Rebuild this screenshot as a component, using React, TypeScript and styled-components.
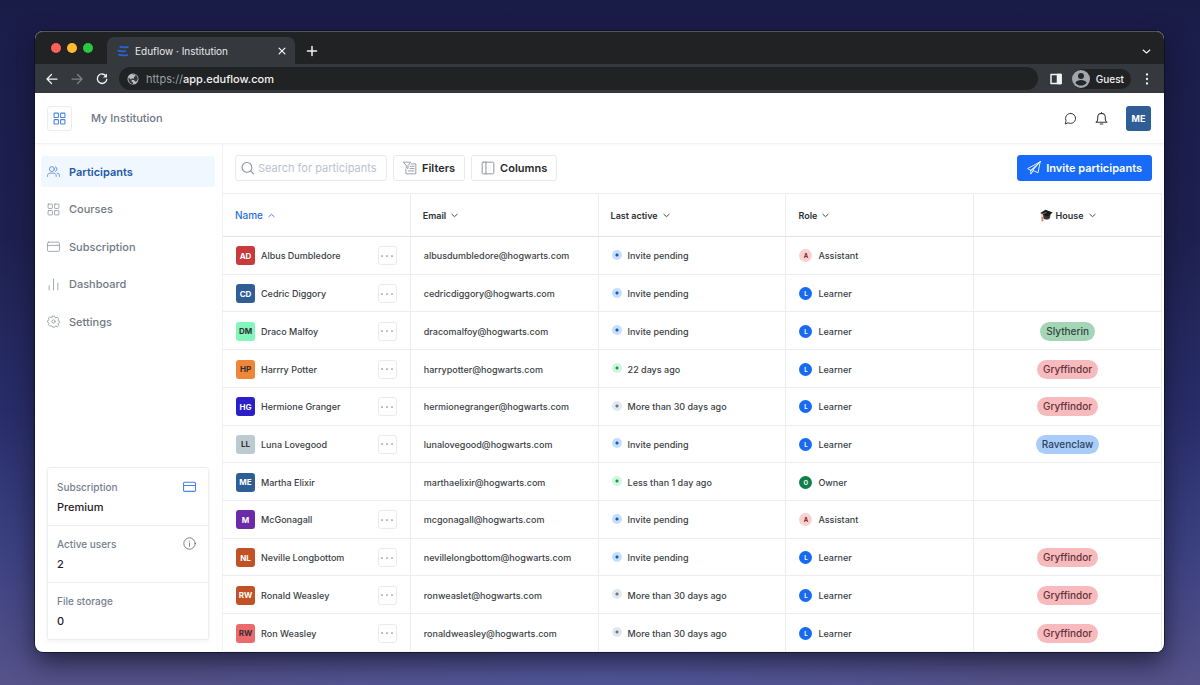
import React from "react";
import styled, { createGlobalStyle } from "styled-components";

const Global = createGlobalStyle`
  *, *::before, *::after { box-sizing: border-box; }
  body { margin: 0; font-family: Inter, "Liberation Sans", sans-serif; color: #3a3e43; }
  button, input { font: inherit; color: inherit; margin: 0; }
  button { cursor: pointer; }
  h1, p, ul, dl, dd { margin: 0; padding: 0; }
`;

const Desktop = styled.div`
  display: flex;
  min-height: 100vh;
  padding: 31px 36px 33px 35px;
  background:
    radial-gradient(ellipse at 50% 108%, #50569a 0%, rgba(80, 86, 154, 0) 50%),
    linear-gradient(180deg, #1a1c48 0%, #1e2150 35%, #282d69 60%, #3b4080 80%, #55538a 100%);
`;

const Window = styled.div`
  flex: 1;
  display: flex;
  flex-direction: column;
  min-width: 0;
  overflow: hidden;
  border-radius: 8px;
  background: #fff;
  box-shadow: 0 0 0 1px rgba(10, 10, 30, 0.6), 0 10px 26px rgba(15, 15, 35, 0.7);
`;

const TabStrip = styled.div`
  display: flex;
  align-items: flex-end;
  height: 33px;
  padding: 0 12px 0 16px;
  background: #202224;
  color: #e8eaed;
  box-shadow: inset 0 1px 0 #55565a;
  border-radius: 8px 8px 0 0;
`;

const Lights = styled.div`
  display: flex;
  align-self: center;
  gap: 6px;
  margin-right: 14px;
`;

const Light = styled.span<{ $color: string }>`
  width: 10px;
  height: 10px;
  border-radius: 50%;
  background: ${(p) => p.$color};
`;

const Tab = styled.div`
  display: flex;
  align-items: center;
  gap: 6px;
  width: 188px;
  height: 27px;
  padding: 0 7px 0 10px;
  border-radius: 7px 7px 0 0;
  background: #35383c;
  font-size: 10px;
`;

const TabTitle = styled.span`
  flex: 1;
`;

const ChromeButton = styled.button<{ $dim?: boolean }>`
  display: flex;
  align-items: center;
  justify-content: center;
  padding: 0;
  width: 12px;
  height: 26px;
  border: 0;
  background: none;
  color: ${(p) => (p.$dim ? "#808386" : "#f1f3f4")};
`;

const NewTab = styled(ChromeButton)`
  margin-left: 11px;
  margin-right: auto;
`;

const AddressRow = styled.div`
  display: flex;
  align-items: center;
  gap: 13px;
  height: 29px;
  padding: 0 11px;
  background: #35383c;
  color: #f1f3f4;
  font-size: 11px;
`;

const Address = styled.div`
  flex: 1;
  display: flex;
  align-items: center;
  gap: 7px;
  height: 23px;
  margin: 0 -1px 0 -2px;
  padding: 0 8px;
  border-radius: 12px;
  background: #202224;
  font-weight: 500;
`;

const Scheme = styled.span`
  color: #9aa0a6;
  font-weight: 400;
`;

const Profile = styled.button`
  display: flex;
  align-items: center;
  gap: 6px;
  height: 20px;
  margin: 0 -3px;
  padding: 0 7px 0 0;
  border: 0;
  border-radius: 10px;
  background: #202224;
  font-size: 10px;
  font-weight: 500;
`;

const AppHeader = styled.header`
  display: flex;
  align-items: center;
  height: 51px;
  padding: 0 13px 0 12px;
  border-bottom: 1px solid #f3f3f5;
  box-shadow: 0 1px 3px rgba(30, 30, 60, 0.04);
`;

const Launcher = styled.button`
  display: flex;
  align-items: center;
  justify-content: center;
  width: 25px;
  height: 25px;
  padding: 0;
  border: 1px solid #e9ecf2;
  border-radius: 3px;
  background: #fff;
  color: #4a85e0;
`;

const Institution = styled.h1`
  margin-left: 19px;
  margin-right: auto;
  font-size: 11px;
  font-weight: 500;
  color: #6c7683;
`;

const HeaderIcon = styled.button`
  display: flex;
  padding: 0;
  margin-right: 18px;
  border: 0;
  background: none;
  color: #34383d;
`;

const Account = styled.button`
  width: 25px;
  height: 25px;
  padding: 0;
  border: 0;
  border-radius: 3px;
  background: #2f5d96;
  color: #fff;
  font-size: 9px;
  font-weight: 700;
`;

const Body = styled.div`
  flex: 1;
  display: flex;
`;

const Sidebar = styled.aside`
  display: flex;
  flex-direction: column;
  justify-content: space-between;
  width: 187px;
  padding: 12px 7px 12px 6px;
`;

const NavList = styled.ul`
  display: flex;
  flex-direction: column;
  justify-content: space-between;
  height: 181px;
  list-style: none;
`;

const NavLink = styled.a<{ $active?: boolean }>`
  display: flex;
  align-items: center;
  gap: 9px;
  height: 31px;
  padding: 0 6px;
  border-radius: 3px;
  background: ${(p) => (p.$active ? "#f1f7fe" : "transparent")};
  color: ${(p) => (p.$active ? "#2458a8" : "#717984")};
  font-size: 11px;
  font-weight: ${(p) => (p.$active ? 600 : 500)};
  text-decoration: none;
  svg { color: ${(p) => (p.$active ? "#4a80cc" : "#8f97a3")}; }
`;

const Usage = styled.dl`
  margin: 0 0 0 6px;
  width: 162px;
  border: 1px solid #eceef1;
  border-radius: 3px;
  box-shadow: 0 2px 4px rgba(30, 40, 60, 0.05);
`;

const UsageItem = styled.div`
  display: grid;
  grid-template-columns: 1fr auto;
  align-content: center;
  gap: 6px;
  height: 57px;
  padding: 0 12px 0 9px;
  & + & { border-top: 1px solid #eceef1; }
`;

const UsageLabel = styled.dt`
  font-size: 10px;
  line-height: 14px;
  font-weight: 500;
  color: #76808e;
`;

const UsageValue = styled.dd`
  font-size: 11px;
  line-height: 14px;
  font-weight: 500;
  color: #1f2226;
`;

const Main = styled.main`
  flex: 1;
  display: flex;
  flex-direction: column;
  min-width: 0;
  padding-right: 2px;
  border-left: 1px solid #f0f1f3;
`;

const Toolbar = styled.div`
  display: flex;
  align-items: center;
  gap: 6px;
  height: 49px;
  padding: 0 10px 1px 12px;
`;

const Search = styled.label`
  display: flex;
  align-items: center;
  gap: 4px;
  width: 152px;
  height: 26px;
  padding: 0 5px;
  border: 1px solid #e8eaee;
  border-radius: 3px;
  color: #8b93a0;
`;

const SearchInput = styled.input`
  flex: 1;
  min-width: 0;
  padding: 0;
  border: 0;
  outline: 0;
  background: none;
  font-size: 11px;
  &::placeholder { color: #bcc2ca; opacity: 1; }
`;

const ToolButton = styled.button<{ $primary?: boolean }>`
  display: flex;
  align-items: center;
  gap: 5px;
  height: 26px;
  padding: 0 9px;
  margin-left: ${(p) => (p.$primary ? "auto" : "0")};
  border: 1px solid ${(p) => (p.$primary ? "#176bf8" : "#e8eaee")};
  border-radius: 3px;
  background: ${(p) => (p.$primary ? "#176bf8" : "#fff")};
  color: ${(p) => (p.$primary ? "#fff" : "#26292d")};
  font-size: 11px;
  font-weight: 600;
  white-space: nowrap;
`;

const TableArea = styled.div`
  flex: 1;
  display: grid;
`;

const Table = styled.table`
  width: 100%;
  height: 100%;
  table-layout: fixed;
  border-collapse: separate;
  border-spacing: 0;
  font-size: 9px;
  font-weight: 500;
`;

const Head = styled.th<{ $center?: boolean }>`
  height: 44px;
  padding: 0 12px;
  border-top: 1px solid #ebedef;
  border-bottom: 1px solid #dfe2ec;
  border-right: 1px solid #ebedef;
  text-align: ${(p) => (p.$center ? "center" : "left")};
`;

const SortButton = styled.button<{ $active?: boolean }>`
  display: inline-flex;
  align-items: center;
  gap: 5px;
  padding: 0;
  border: 0;
  background: none;
  color: ${(p) => (p.$active ? "#2c6de0" : "#2c3035")};
  font-size: ${(p) => (p.$active ? "10px" : "9px")};
  font-weight: ${(p) => (p.$active ? 500 : 600)};
  vertical-align: middle;
`;

const HouseLabel = styled.span`
  display: flex;
  align-items: center;
  gap: 3px;
`;

const Cell = styled.td<{ $center?: boolean }>`
  height: 37px;
  padding: 1px 13px 0;
  border-bottom: 1px solid #ebedef;
  border-right: 1px solid #ebedef;
  text-align: ${(p) => (p.$center ? "center" : "left")};
  white-space: nowrap;
  tr:last-child > & { border-bottom-color: #f6f7f8; }
`;

const Row = styled.div`
  display: flex;
  align-items: center;
  gap: 6px;
`;

const Avatar = styled.span<{ $bg: string; $dark?: boolean }>`
  display: flex;
  align-items: center;
  justify-content: center;
  width: 19px;
  height: 19px;
  border-radius: 3px;
  background: ${(p) => p.$bg};
  color: ${(p) => (p.$dark ? "#33302f" : "#fff")};
  font-size: 8px;
  font-weight: 700;
`;

const MoreButton = styled.button`
  display: flex;
  align-items: center;
  justify-content: center;
  width: 19px;
  height: 19px;
  margin-left: auto;
  padding: 0;
  border: 1px solid #e9ebee;
  border-radius: 3px;
  background: #fff;
  color: #7f8691;
`;

const StatusDot = styled.span<{ $ring: string; $dot: string }>`
  width: 10px;
  height: 10px;
  margin-bottom: 2px;
  border-radius: 50%;
  background: radial-gradient(circle, ${(p) => p.$dot} 0 1px, ${(p) => p.$ring} 2px);
`;

const RoleBadge = styled.span<{ $bg: string; $fg: string }>`
  display: flex;
  align-items: center;
  justify-content: center;
  width: 13px;
  height: 13px;
  border-radius: 50%;
  background: ${(p) => p.$bg};
  color: ${(p) => p.$fg};
  font-size: 6px;
  font-weight: 700;
`;

const House = styled.span<{ $bg: string; $fg: string }>`
  display: inline-block;
  padding: 0 6px;
  border-radius: 10px;
  background: ${(p) => p.$bg};
  color: ${(p) => p.$fg};
  font-size: 10px;
  line-height: 19px;
  font-weight: 500;
  vertical-align: middle;
`;

type IconProps = { size?: number; stroke?: number; color?: string; children?: React.ReactNode };
const Icon = ({ size = 13, stroke = 1.5, color = "currentColor", children }: IconProps) => (
  <svg width={size} height={size} viewBox="0 0 24 24" fill="none" stroke={color} strokeWidth={stroke} strokeLinecap="round" strokeLinejoin="round" aria-hidden="true">
    {children}
  </svg>
);

const GridPaths = () => (
  <>
    <rect x="2" y="2" width="8" height="8" rx="1" />
    <rect x="14" y="2" width="8" height="8" rx="1" />
    <rect x="2" y="14" width="8" height="8" rx="1" />
    <rect x="14" y="14" width="8" height="8" rx="1" />
  </>
);
const UsersPaths = () => (
  <>
    <circle cx="9" cy="7.500" r="4.500" />
    <path d="M1 21v-1.500C1 16.500 3.500 15 6 15h6c2.500 0 5 1.500 5 4.500V21" />
    <path d="M15.500 3.300a4.500 4.500 0 0 1 0 8.400M19 15c2.500.3 4 2 4 4.500V21" />
  </>
);
const CardPaths = () => (
  <>
    <rect x="1" y="4" width="22" height="17" rx="2" />
    <path d="M1 10h22" />
  </>
);
const BarsPaths = () => <path d="M4 14v8M12 2v20M20 9v13" />;
const GearPaths = () => (
  <>
    <circle cx="12" cy="12" r="3" />
    <path d="M10 2h4l.8 2.600 1.700.7L18.900 4l2.600 2.600-1.200 2.600.7 1.600 2 .7v2.600l-2 .9-.7 1.600 1.200 2.500-2.500 2.600-2.600-1.200-1.700.7L14 22.500h-4l-.8-2.300-1.700-.7-2.500 1.200-2.600-2.500 1.300-2.600-.8-1.600L1 13.200v-2.500l1.900-.8.8-1.700-1.300-2.500L5 3.500l2.500 1.700 1.700-.6z" />
  </>
);

const Chevron = ({ up, size = 7 }: { up?: boolean; size?: number }) => (
  <Icon size={size} stroke={3}>
    <path d={up ? "M3 16l9-8 9 8" : "M3 8l9 8 9-8"} />
  </Icon>
);

const CapIcon = () => (
  <svg width="13" height="13" viewBox="0 0 26 26" aria-hidden="true">
    <path d="M6 10l1 9c3 3 10 3 13-1l1-8z" fill="#34373a" />
    <path d="M0.500 8L11 1.500 25.500 7 15 15.500z" fill="#17191b" />
    <path d="M13 7L4 10v8" fill="none" stroke="#c98a5c" strokeWidth="1.500" />
    <path d="M3 16h3l1 8-4 1z" fill="#c98a5c" />
  </svg>
);

const nav = [
  { label: "Participants", icon: <UsersPaths />, active: true },
  { label: "Courses", icon: <GridPaths /> },
  { label: "Subscription", icon: <CardPaths /> },
  { label: "Dashboard", icon: <BarsPaths /> },
  { label: "Settings", icon: <GearPaths /> },
];

const statuses = {
  pending: { text: "Invite pending", ring: "#c3dfff", dot: "#1c5aa8" },
  days22: { text: "22 days ago", ring: "#cdf8dd", dot: "#2c8a55" },
  today: { text: "Less than 1 day ago", ring: "#cdf8dd", dot: "#2c8a55" },
  month: { text: "More than 30 days ago", ring: "#e3e7f0", dot: "#6f7785" },
};
const roles = {
  Assistant: { bg: "#f9d0d0", fg: "#7a2222" },
  Learner: { bg: "#176bf0", fg: "#ffffff" },
  Owner: { bg: "#0f8048", fg: "#ffffff" },
};
const houses = {
  Slytherin: { bg: "#a5d4b7", fg: "#2c4a3c" },
  Gryffindor: { bg: "#f7babd", fg: "#63323a" },
  Ravenclaw: { bg: "#a9cdf8", fg: "#2b4263" },
};

type Person = {
  initials: string; bg: string; dark?: boolean; name: string; email: string;
  status: keyof typeof statuses; role: keyof typeof roles; house?: keyof typeof houses; self?: boolean;
};
const people: Person[] = [
  { initials: "AD", bg: "#c93a3c", name: "Albus Dumbledore", email: "albusdumbledore@hogwarts.com", status: "pending", role: "Assistant" },
  { initials: "CD", bg: "#2f5d96", name: "Cedric Diggory", email: "cedricdiggory@hogwarts.com", status: "pending", role: "Learner" },
  { initials: "DM", bg: "#82f6bd", dark: true, name: "Draco Malfoy", email: "dracomalfoy@hogwarts.com", status: "pending", role: "Learner", house: "Slytherin" },
  { initials: "HP", bg: "#f08637", dark: true, name: "Harrry Potter", email: "harrypotter@hogwarts.com", status: "days22", role: "Learner", house: "Gryffindor" },
  { initials: "HG", bg: "#2a1fc8", name: "Hermione Granger", email: "hermionegranger@hogwarts.com", status: "month", role: "Learner", house: "Gryffindor" },
  { initials: "LL", bg: "#bccbd2", dark: true, name: "Luna Lovegood", email: "lunalovegood@hogwarts.com", status: "pending", role: "Learner", house: "Ravenclaw" },
  { initials: "ME", bg: "#2f5d96", name: "Martha Elixir", email: "marthaelixir@hogwarts.com", status: "today", role: "Owner", self: true },
  { initials: "M", bg: "#6b2aa8", name: "McGonagall", email: "mcgonagall@hogwarts.com", status: "pending", role: "Assistant" },
  { initials: "NL", bg: "#c25225", name: "Neville Longbottom", email: "nevillelongbottom@hogwarts.com", status: "pending", role: "Learner", house: "Gryffindor" },
  { initials: "RW", bg: "#c25225", name: "Ronald Weasley", email: "ronweaslet@hogwarts.com", status: "month", role: "Learner", house: "Gryffindor" },
  { initials: "RW", bg: "#ec6a6c", dark: true, name: "Ron Weasley", email: "ronaldweasley@hogwarts.com", status: "month", role: "Learner", house: "Gryffindor" },
];

const BrowserChrome = () => (
  <>
    <TabStrip>
      <Lights>
        <Light $color="#fe5f57" />
        <Light $color="#febb2e" />
        <Light $color="#2ac840" />
      </Lights>
      <Tab>
        <svg width="12" height="12" viewBox="0 0 24 24" fill="none" stroke="#2e62d9" strokeWidth="3.500" aria-hidden="true">
          <path d="M5 3c6 3 11 2 18 1M1 11c6 2 11 2 17 1M3 19c6 3 12 2 19 1" />
        </svg>
        <TabTitle>Eduflow · Institution</TabTitle>
        <ChromeButton aria-label="Close tab">
          <Icon size={10} stroke={3}><path d="M5 5l14 14M19 5L5 19" /></Icon>
        </ChromeButton>
      </Tab>
      <NewTab aria-label="New tab">
        <Icon size={12} stroke={3}><path d="M12 3v18M3 12h18" /></Icon>
      </NewTab>
      <ChromeButton aria-label="Search tabs"><Chevron size={9} /></ChromeButton>
    </TabStrip>
    <AddressRow>
      <ChromeButton aria-label="Back"><Icon size={12} stroke={2.5}><path d="M22 12H2M11 3l-9 9 9 9" /></Icon></ChromeButton>
      <ChromeButton $dim aria-label="Forward"><Icon size={12} stroke={2.5}><path d="M2 12h20M13 3l9 9-9 9" /></Icon></ChromeButton>
      <ChromeButton aria-label="Reload">
        <Icon size={13} stroke={2.8}><path d="M20 7a9.500 9.500 0 1 0 1.500 7" /><path d="M22 2v8h-8z" fill="currentColor" stroke="none" /></Icon>
      </ChromeButton>
      <Address>
        <svg width="12" height="12" viewBox="0 0 24 24" aria-hidden="true">
          <circle cx="12" cy="12" r="11" fill="#b9bcc0" />
          <path d="M3 9l6 5v3l3 2v3C6 22 2 17 3 9zM10 3h6l1 3-3 2v3H9l-1 3 6 0 2 3h3c2-2 3-5 2-9-1-4-7-8-11-5z" fill="#34373b" />
        </svg>
        <span><Scheme>https://</Scheme>app.eduflow.com</span>
      </Address>
      <ChromeButton aria-label="Side panel">
        <Icon size={12} stroke={3}><rect x="2" y="3" width="20" height="18" /><path d="M15 3h7v18h-7z" fill="currentColor" /></Icon>
      </ChromeButton>
      <Profile>
        <svg width="18" height="18" viewBox="0 0 24 24" aria-hidden="true">
          <circle cx="12" cy="12" r="12" fill="#a3a6aa" />
          <circle cx="12" cy="8" r="4" fill="#25272a" />
          <path d="M4.500 17c2-5 13-5 15 0-3 5-12 5-15 0z" fill="#25272a" />
        </svg>
        Guest
      </Profile>
      <ChromeButton aria-label="Menu">
        <Icon size={12} stroke={0}><g fill="#f1f3f4"><circle cx="12" cy="3" r="2.300" /><circle cx="12" cy="12" r="2.300" /><circle cx="12" cy="21" r="2.300" /></g></Icon>
      </ChromeButton>
    </AddressRow>
  </>
);

const PersonRow = ({ person: p }: { person: Person }) => {
  const s = statuses[p.status];
  const r = roles[p.role];
  const h = p.house && houses[p.house];
  return (
    <tr>
      <Cell>
        <Row>
          <Avatar $bg={p.bg} $dark={p.dark}>{p.initials}</Avatar>
          {p.name}
          {!p.self && (
            <MoreButton aria-label={`Actions for ${p.name}`}>
              <Icon size={12} stroke={0}><g fill="currentColor"><circle cx="2" cy="12" r="1.700" /><circle cx="12" cy="12" r="1.700" /><circle cx="22" cy="12" r="1.700" /></g></Icon>
            </MoreButton>
          )}
        </Row>
      </Cell>
      <Cell>{p.email}</Cell>
      <Cell><Row><StatusDot $ring={s.ring} $dot={s.dot} />{s.text}</Row></Cell>
      <Cell><Row><RoleBadge $bg={r.bg} $fg={r.fg}>{p.role[0]}</RoleBadge>{p.role}</Row></Cell>
      <Cell $center>{h && <House $bg={h.bg} $fg={h.fg}>{p.house}</House>}</Cell>
    </tr>
  );
};

export default function App() {
  return (
    <Desktop>
      <Global />
      <Window>
        <BrowserChrome />
        <AppHeader>
          <Launcher aria-label="Apps"><Icon size={13} stroke={2}><GridPaths /></Icon></Launcher>
          <Institution>My Institution</Institution>
          <HeaderIcon aria-label="Messages">
            <Icon stroke={1.8}><path d="M2.500 21.500l1.200-5.500A9.300 9.300 0 1 1 8 20.300z" /></Icon>
          </HeaderIcon>
          <HeaderIcon aria-label="Notifications">
            <Icon stroke={2}><path d="M2 19h20c-2-1-3-3-3-6V9.500a7 7 0 0 0-14 0V13c0 3-1 5-3 6zM9.500 22h5M12 2.500V1" /></Icon>
          </HeaderIcon>
          <Account>ME</Account>
        </AppHeader>
        <Body>
          <Sidebar>
            <nav>
              <NavList>
                {nav.map((n) => (
                  <li key={n.label}>
                    <NavLink href="#" $active={n.active}><Icon>{n.icon}</Icon>{n.label}</NavLink>
                  </li>
                ))}
              </NavList>
            </nav>
            <Usage>
              <UsageItem>
                <UsageLabel>Subscription</UsageLabel>
                <Icon color="#4a85e0" stroke={2}><CardPaths /></Icon>
                <UsageValue>Premium</UsageValue>
              </UsageItem>
              <UsageItem>
                <UsageLabel>Active users</UsageLabel>
                <Icon color="#60656c"><circle cx="12" cy="12" r="10.500" /><path d="M12 11v6M12 7.500v.2" /></Icon>
                <UsageValue>2</UsageValue>
              </UsageItem>
              <UsageItem>
                <UsageLabel>File storage</UsageLabel>
                <span />
                <UsageValue>0</UsageValue>
              </UsageItem>
            </Usage>
          </Sidebar>
          <Main>
            <Toolbar>
              <Search>
                <Icon stroke={2}><circle cx="11" cy="10" r="9" /><path d="M18 17l5 5" /></Icon>
                <SearchInput type="text" aria-label="Search for participants" placeholder="Search for participants" />
              </Search>
              <ToolButton>
                <Icon size={14} color="#8b93a0"><path d="M1 2h12L8.500 8v5L5.500 11V8zM14 5h8v17H5v-8M12 9h7M12 13h7M9 17h10" /></Icon>
                Filters
              </ToolButton>
              <ToolButton>
                <Icon size={14} color="#7f8794"><rect x="2" y="2" width="20" height="20" rx="2" /><path d="M8.500 2v20" /></Icon>
                Columns
              </ToolButton>
              <ToolButton $primary>
                <Icon size={14}><path d="M22.500 1.500L1 13l5.500 3zM22.500 1.500L19 20l-8.500-3.500zM6.500 16v6.500l4-6M6.500 16L22.500 1.500" /></Icon>
                Invite participants
              </ToolButton>
            </Toolbar>
            <TableArea>
              <Table>
                <thead>
                  <tr>
                    <Head><SortButton $active>Name <Chevron up /></SortButton></Head>
                    <Head><SortButton>Email <Chevron /></SortButton></Head>
                    <Head><SortButton>Last active <Chevron /></SortButton></Head>
                    <Head><SortButton>Role <Chevron /></SortButton></Head>
                    <Head $center><SortButton><HouseLabel><CapIcon />House</HouseLabel><Chevron /></SortButton></Head>
                  </tr>
                </thead>
                <tbody>
                  {people.map((p) => <PersonRow key={p.email} person={p} />)}
                </tbody>
              </Table>
            </TableArea>
          </Main>
        </Body>
      </Window>
    </Desktop>
  );
}
